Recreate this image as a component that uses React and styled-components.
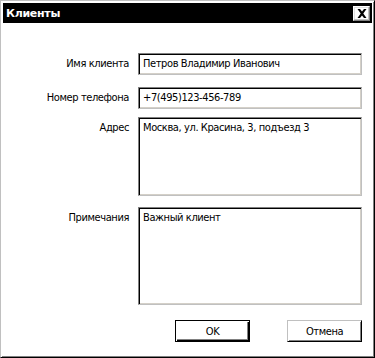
import React from "react";
import styled, { createGlobalStyle } from "styled-components";

const FONT = `"DejaVu Sans", "Liberation Sans", sans-serif`;

const Global = createGlobalStyle`
  html, body { margin: 0; padding: 0; background: #fff; }
  body { font-family: ${FONT}; font-stretch: condensed; font-size: 11px; letter-spacing: -0.4px; color: #000; }
  * { box-sizing: border-box; }
`;

const Window = styled.div`
  width: 375px;
  height: 358px;
  display: flex;
  flex-direction: column;
  background: #fff;
  border: 1px solid;
  border-color: #c0c0c0 #000 #000 #c0c0c0;
  box-shadow: inset 1px 1px #fff, inset -1px -1px #808080;
  padding: 2px;
`;

const TitleBar = styled.div`
  height: 20px;
  background: #000;
  display: flex;
  align-items: center;
  justify-content: space-between;
  padding: 0 2px 0 3px;
`;

const Title = styled.span`
  color: #fff;
  font-weight: bold;
  font-size: 11px;
  font-stretch: normal;
  letter-spacing: -0.3px;
  font-family: ${FONT};
`;

const CloseButton = styled.button`
  width: 17px;
  height: 15px;
  padding: 0;
  margin: 0;
  background: #fff;
  border: 1px solid;
  border-color: #fff #808080 #808080 #fff;
  box-shadow: inset -1px -1px #c0c0c0, inset 1px 1px #e0e0e0;
  display: flex;
  align-items: center;
  justify-content: center;
`;

const Body = styled.div`
  flex: 1;
  display: flex;
  flex-direction: column;
  padding: 30px 10px 0 0;
`;

const Form = styled.div`
  display: grid;
  grid-template-columns: 126px 224px;
  column-gap: 9px;
`;

const Label = styled.label`
  text-align: right;
  padding-top: 4px;
  margin-top: ${(p) => p.$mt || 0}px;
  white-space: nowrap;
  line-height: 13px;
`;

const fieldStyles = `
  display: block;
  width: 224px;
  margin: 0;
  font-family: ${FONT};
  font-stretch: condensed;
  font-size: 11px;
  letter-spacing: -0.4px;
  color: #000;
  background: #fff;
  border: 1px solid;
  border-color: #808080 #c0c0c0 #c0c0c0 #808080;
  box-shadow: inset 1px 1px #000, inset -1px -1px #d4d0c8;
  outline: none;
  padding: 0 4px;
`;

const TextField = styled.input`
  ${fieldStyles}
  height: ${(p) => p.$h}px;
  margin-top: ${(p) => p.$mt || 0}px;
  line-height: 13px;
  padding-bottom: 1px;
`;

const TextArea = styled.textarea`
  ${fieldStyles}
  height: ${(p) => p.$h}px;
  margin-top: ${(p) => p.$mt || 0}px;
  resize: none;
  overflow: hidden;
  line-height: 13px;
  padding-top: 3px;
`;

const Buttons = styled.div`
  display: flex;
  justify-content: flex-end;
  gap: 37px;
  margin-top: 15px;
`;

const Button = styled.button`
  width: 75px;
  height: 22px;
  margin: 0;
  padding: 0;
  font-family: ${FONT};
  font-stretch: condensed;
  font-size: 11px;
  letter-spacing: -0.4px;
  color: #000;
  background: #fff;
  border: 1px solid;
  border-color: ${(p) => (p.$default ? "#000" : "#c0c0c0 #000 #000 #c0c0c0")};
  box-shadow: ${(p) =>
    p.$default
      ? "inset 1px 1px #fff, inset -1px -1px #000, inset -2px -2px #808080"
      : "inset 1px 1px #fff, inset -1px -1px #808080"};
`;

export default function App() {
  return (
    <>
      <Global />
      <Window>
        <TitleBar>
          <Title>Клиенты</Title>
          <CloseButton aria-label="Закрыть">
            <svg width="10" height="9" viewBox="0 0 10 9">
              <path d="M0.5 0h2.5l2 2.6 2-2.6h2.5L6.3 4.5 9.5 9H7L5 6.4 3 9H0.5l3.2-4.5z" fill="#000" />
            </svg>
          </CloseButton>
        </TitleBar>
        <Body>
          <Form>
            <Label>Имя клиента</Label>
            <TextField $h={22} readOnly defaultValue="Петров Владимир Иванович" />
            <Label $mt={12}>Номер телефона</Label>
            <TextField $h={22} $mt={12} readOnly defaultValue="+7(495)123-456-789" />
            <Label $mt={8}>Адрес</Label>
            <TextArea $h={79} $mt={8} readOnly defaultValue="Москва, ул. Красина, 3, подъезд 3" />
            <Label $mt={11}>Примечания</Label>
            <TextArea $h={98} $mt={11} readOnly defaultValue="Важный клиент" />
          </Form>
          <Buttons>
            <Button $default>OK</Button>
            <Button>Отмена</Button>
          </Buttons>
        </Body>
      </Window>
    </>
  );
}
